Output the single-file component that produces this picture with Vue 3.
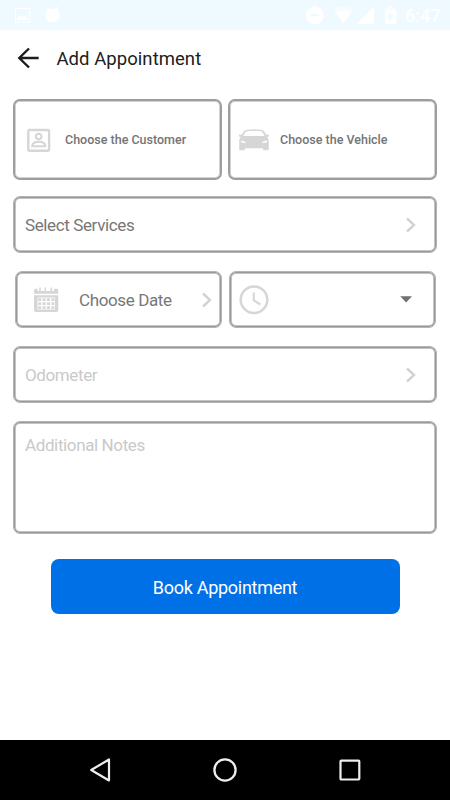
<script setup>
import { ref } from 'vue'

const odometer = ref('')
const notes = ref('')
const people = [
  { id: 'customer', label: 'Choose the Customer' },
  { id: 'vehicle', label: 'Choose the Vehicle' },
]
</script>

<template>
  <div class="screen">
    <header class="status">
      <svg class="status-left" width="64" height="30" viewBox="0 0 64 30">
        <rect x="15.500" y="8.500" width="14" height="13.500" fill="none" stroke="#fff" />
        <path d="M17 20V17.500L20 15.500L22.500 17L24 16L28 18.500V20Z" fill="#fff" />
        <path d="M47.500 6L50 9Q52.500 8.200 55 9L57.500 6L58 10.500Q60 13 59.500 18Q58.500 22 52.500 22Q46.500 22 45.500 18Q45 13 47 10.500Z" fill="#fff" />
        <circle cx="49" cy="15" r=".7" fill="#eefaff" />
        <circle cx="56" cy="15" r=".7" fill="#eefaff" />
      </svg>
      <div class="status-right">
        <svg width="96" height="30" viewBox="304 0 96 30">
          <circle cx="314.700" cy="15.300" r="9" fill="#fff" />
          <rect x="310.500" y="14" width="8.500" height="2.200" fill="#eefaff" />
          <path d="M333.500 9.500Q343.500 3 353.500 9.500L343.500 23.500Z" fill="#fff" opacity=".45" />
          <path d="M336 13Q343.500 8.700 351 13L343.500 23.500Z" fill="#fff" />
          <path d="M357 24L374 6.500V24Z" fill="#fff" />
          <path d="M387 6h6v2h3.500v3H385V8h2Z" fill="#fff" opacity=".5" />
          <path d="M385 10.500h11.500V24H385Z" fill="#fff" />
          <path d="M391.500 10.500L387 17.500h3L389 22L394.500 15h-3.300Z" fill="#eefaff" />
        </svg>
        <span class="clock">6:47</span>
      </div>
    </header>

    <div class="toolbar">
      <svg width="22" height="22" viewBox="17 47 22 22">
        <path d="M38.700 58H19.500M29 48.500L19.300 58L29 67.500" fill="none" stroke="#1d1d20" stroke-width="2.400" />
      </svg>
      <h1>Add Appointment</h1>
    </div>

    <main>
      <div class="people">
        <button v-for="p in people" :key="p.id" class="box card" :class="p.id">
          <svg v-if="p.id === 'customer'" width="24" height="24" viewBox="27 127 24 24">
            <rect x="28.300" y="129" width="20.800" height="20.800" rx="1.200" fill="none" stroke="#d6d6d6" stroke-width="2.400" />
            <circle cx="38.700" cy="135.500" r="2.800" fill="none" stroke="#d6d6d6" stroke-width="2" />
            <path d="M32.200 145.200C32.200 142 35.500 140.700 38.700 140.700S45.300 142 45.300 145.200Z" fill="none" stroke="#d6d6d6" stroke-width="2" />
          </svg>
          <svg v-else width="32" height="24" viewBox="238 128 32 24">
            <path fill="#d6d6d6" fill-rule="evenodd" d="M244.500 130.700Q246 129.300 253.800 129.200Q262 129.300 263.500 130.700Q265 132.300 266.200 134.800Q268 134.200 268.900 134.800L268.500 136.700L267.200 137Q268.800 138.700 268.800 141.500V149.500Q268.500 150.200 267.500 150.200H264Q263 150.200 263 149V148.300H245V149Q245 150.200 244 150.200H240Q239.200 150.200 239.200 149V141.500Q239.200 138.700 240.700 137L239.300 136.700L238.800 134.800Q239.700 134.200 241.700 134.800Q243 132.300 244.500 130.700ZM246.300 131.500Q244.300 133 243.300 136H264.500Q263.500 133 261.700 131.500Q259.500 130.700 254 130.700Q248 130.700 246.300 131.500ZM241 140.400V142Q243.500 143.400 246 142.800Q245.500 141.200 241 140.400ZM267 140.400Q262.500 141.200 262 142.800Q264.500 143.400 267 142Z" />
          </svg>
          <span>{{ p.label }}</span>
        </button>
      </div>

      <button class="box soft row services">
        <span>Select Services</span>
        <svg class="chev" width="12" height="16" viewBox="0 0 12 16"><path d="M2 1.500L9 8L2 14.500" /></svg>
      </button>

      <div class="when">
        <button class="box soft date">
          <svg width="26" height="26" viewBox="33 287 26 26">
            <path fill="#d6d6d6" fill-rule="evenodd" d="M35.500 288.700H37.500V291H39.200V287.500H40.800V291H44.500V287.500H46V291H50.500V287.500H52V291H54V288.700H56.500Q58.300 288.700 58.300 291V293.700H34V291Q34 288.700 35.500 288.700ZM34 295.300H58.300V310Q58.300 312 56.500 312H36Q34 312 34 310ZM37.500 297.500V309.500H55V297.500Z" />
            <path fill="#d6d6d6" d="M38.200 298.300h3v2.800h-3zM42.600 298.300h3v2.800h-3zM47 298.300h3v2.800h-3zM51.400 298.300h3v2.800h-3zM38.200 302.300h3v2.800h-3zM42.600 302.300h3v2.800h-3zM47 302.300h3v2.800h-3zM51.400 302.300h3v2.800h-3zM38.200 306.300h3v2.800h-3zM42.600 306.300h3v2.800h-3zM47 306.300h3v2.800h-3zM51.400 306.300h3v2.800h-3z" />
          </svg>
          <span>Choose Date</span>
          <svg class="chev" width="12" height="16" viewBox="0 0 12 16"><path d="M2 1.500L9 8L2 14.500" /></svg>
        </button>
        <button class="box soft time">
          <svg width="30" height="30" viewBox="0 0 30 30" fill="none" stroke="#d6d6d6">
            <circle cx="15" cy="14.800" r="13.300" stroke-width="2.500" />
            <path d="M14.800 7.500V15.500L21.500 19.500" stroke-width="2.100" />
          </svg>
          <svg width="12" height="7" viewBox="0 0 12 7"><path d="M.2 .2H12L6.100 6.500Z" fill="#707070" /></svg>
        </button>
      </div>

      <label class="box soft row odometer">
        <input v-model="odometer" placeholder="Odometer" />
        <svg class="chev" width="12" height="16" viewBox="0 0 12 16"><path d="M2 1.500L9 8L2 14.500" /></svg>
      </label>

      <textarea v-model="notes" class="box soft notes" placeholder="Additional Notes"></textarea>

      <button class="book">Book Appointment</button>
    </main>

    <nav>
      <svg width="24" height="26" viewBox="88 757 24 26"><path d="M109 759.500V780.500L91.200 770Z" fill="none" stroke="#eee" stroke-width="2.200" stroke-linejoin="round" /></svg>
      <svg width="26" height="26" viewBox="0 0 26 26"><circle cx="13" cy="13" r="10.600" fill="none" stroke="#eee" stroke-width="2.300" /></svg>
      <svg width="24" height="26" viewBox="0 0 24 26"><rect x="2.500" y="3.700" width="18.800" height="18.800" rx=".7" fill="none" stroke="#eee" stroke-width="2.200" /></svg>
    </nav>
  </div>
</template>

<style>
body {
  margin: 0;
}
</style>

<style scoped>
* {
  box-sizing: border-box;
}
.screen {
  width: 450px;
  height: 800px;
  display: flex;
  flex-direction: column;
  background: #fff;
  font-family: Roboto, "Liberation Sans", sans-serif;
  overflow: hidden;
}
svg {
  display: block;
  flex: none;
}
button,
input,
textarea {
  font: inherit;
  letter-spacing: inherit;
  color: inherit;
  padding: 0;
  border: 0;
  outline: 0;
  background: none;
}
.status {
  height: 30px;
  flex: none;
  display: flex;
  justify-content: space-between;
  background: #eefaff;
}
.status-right {
  display: flex;
  width: 146px;
}
.clock {
  margin-left: 5px;
  font-size: 18px;
  line-height: 31px;
  font-weight: 500;
  color: #fff;
}
.toolbar {
  height: 69px;
  flex: none;
  display: flex;
  align-items: flex-start;
  padding: 17px 0 0 17px;
}
.toolbar h1 {
  margin: 1px 0 0 17.500px;
  font-size: 18.500px;
  line-height: 22px;
  letter-spacing: 0.050px;
  font-weight: 400;
  color: #202020;
}
main {
  flex: 1;
  padding: 0 13px;
  display: flex;
  flex-direction: column;
}
.box {
  display: flex;
  align-items: center;
  border: 2px solid #9e9e9e;
  border-radius: 7px;
  box-shadow: inset 0 0 0 1px #d2d2d2;
  background: #fff;
}
.soft {
  border: 1px solid #b4b4b4;
  box-shadow: inset 0 0 0 1px #999, inset 0 0 0 2px #c4c4c4;
}
.people {
  display: grid;
  grid-template-columns: 209px 209px;
  gap: 6px;
  height: 81px;
}
.card {
  font-size: 12.500px;
  font-weight: 500;
  color: #747474;
}
.customer {
  padding-left: 12px;
}
.customer span {
  margin-left: 14px;
}
.vehicle {
  padding-left: 8px;
}
.vehicle span {
  margin-left: 10px;
}
.row {
  height: 57px;
  justify-content: space-between;
  padding: 1px 19px 0 11px;
  font-size: 17px;
  letter-spacing: -0.380px;
}
.services {
  margin-top: 16px;
  color: #777;
}
.chev path {
  fill: none;
  stroke: #d2d2d2;
  stroke-width: 2.400;
}
.when {
  display: grid;
  grid-template-columns: 207px 207px;
  gap: 7px;
  margin: 18px 0 0 2px;
  height: 57px;
}
.date {
  padding-left: 17px;
  font-size: 17px;
  letter-spacing: -0.380px;
  color: #777;
}
.date span {
  margin-left: 20px;
  width: 122px;
  text-align: left;
}
.time {
  justify-content: space-between;
  padding: 0 23px 0 9px;
}
.odometer {
  margin-top: 18px;
}
.odometer input {
  flex: 1;
}
input::placeholder,
textarea::placeholder {
  color: #c9c9c9;
  opacity: 1;
}
.notes {
  flex: none;
  height: 113px;
  margin-top: 18px;
  padding: 13px 11px;
  font-size: 17px;
  line-height: 20px;
  letter-spacing: -0.380px;
  resize: none;
}
.book {
  width: 349px;
  height: 55px;
  margin: 25px 0 0 37.500px;
  border-radius: 8px;
  background: #0070e6;
  color: #fff;
  font-size: 18px;
  letter-spacing: -0.280px;
  line-height: 57px;
}
nav {
  height: 60px;
  flex: none;
  padding: 0 88px;
  display: flex;
  align-items: center;
  justify-content: space-between;
  background: #000;
}
</style>
